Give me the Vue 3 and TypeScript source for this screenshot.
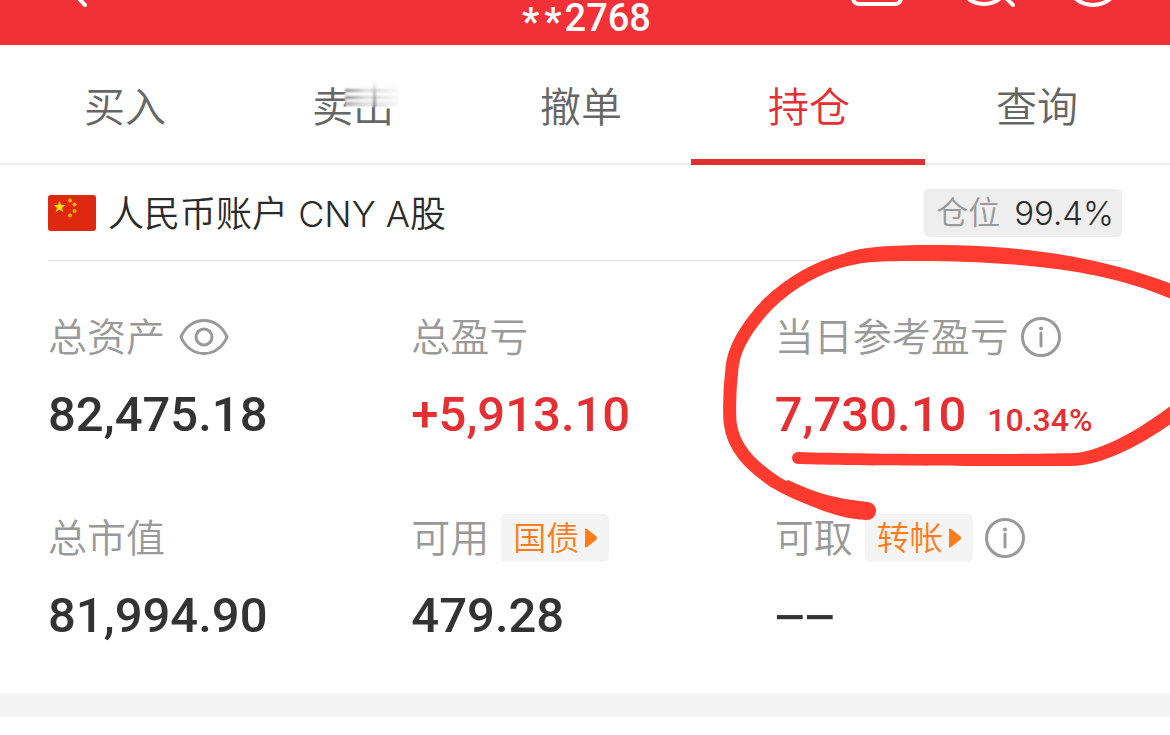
<script setup lang="ts">
interface Stat {
  id: string
  label: string
  value: string
  tone?: 'up' | 'empty'
  extra?: string
  action?: string
  eye?: boolean
  info?: boolean
}

const tabs: string[] = ['买入', '卖出', '撤单', '持仓', '查询']
const activeTab = '持仓'

const stats: Stat[] = [
  { id: 'assets', label: '总资产', value: '82,475.18', eye: true },
  { id: 'profit', label: '总盈亏', value: '+5,913.10', tone: 'up' },
  { id: 'today', label: '当日参考盈亏', value: '7,730.10', tone: 'up', extra: '10.34%', info: true },
  { id: 'market', label: '总市值', value: '81,994.90' },
  { id: 'available', label: '可用', value: '479.28', action: '国债' },
  { id: 'withdraw', label: '可取', value: '−−', tone: 'empty', action: '转帐', info: true },
]
</script>

<template>
  <main class="page">
    <header class="topbar">
      <button class="icon-btn" aria-label="返回">
        <svg width="60" height="45" viewBox="44 0 60 45"><path d="M67 -14L85 5" /></svg>
      </button>
      <h1 class="account"><span class="mask"><span>*</span><span>*</span></span>2768</h1>
      <div class="tools">
        <button class="icon-btn" aria-label="消息">
          <svg width="60" height="45" viewBox="847 0 60 45"><rect x="853" y="-34" width="48" height="38" rx="6" /></svg>
        </button>
        <button class="icon-btn" aria-label="搜索">
          <svg width="60" height="45" viewBox="957 0 60 45"><circle cx="986" cy="-22" r="26" /><path d="M1005 -5L1015 5" /></svg>
        </button>
        <button class="icon-btn" aria-label="更多">
          <svg width="60" height="45" viewBox="1063 0 60 45"><circle cx="1093" cy="-22" r="27" /></svg>
        </button>
      </div>
    </header>

    <nav class="tabs">
      <button v-for="tab in tabs" :key="tab" class="tab" :class="{ active: tab === activeTab }">
        {{ tab }}
        <span v-if="tab === '卖出'" class="smudge" aria-hidden="true"></span>
      </button>
    </nav>

    <section class="account-row">
      <svg class="flag" width="48" height="36" viewBox="0 0 48 36" aria-hidden="true">
        <rect width="48" height="36" rx="3" fill="#de2910" />
        <g fill="#ffde00">
          <path d="M11.500 5.500L13 10L17.500 10L14 12.800L15.300 17.200L11.500 14.500L7.700 17.200L9 12.800L5.500 10L10 10Z" />
          <g opacity=".75">
            <circle cx="22" cy="5.500" r="2" /><circle cx="26.500" cy="9.500" r="2" />
            <circle cx="26.500" cy="16" r="2" /><circle cx="22" cy="20.500" r="2" />
          </g>
        </g>
      </svg>
      <h2 class="account-name">人民币账户 CNY A股</h2>
      <div class="position"><span class="position-label">仓位</span><span>99.4%</span></div>
    </section>

    <section class="stats">
      <div v-for="stat in stats" :key="stat.id" class="stat">
        <div class="stat-head">
          <span>{{ stat.label }}</span>
          <button v-if="stat.eye" class="icon-btn eye" aria-label="隐藏金额">
            <svg width="50" height="36" viewBox="0 0 50 36">
              <path d="M2 18C11 -4 39 -4 48 18C39 40 11 40 2 18Z" /><circle cx="25" cy="18" r="8" />
            </svg>
          </button>
          <button v-if="stat.action" class="action">
            {{ stat.action }}
            <svg width="12" height="20" viewBox="0 0 12 20" aria-hidden="true"><path d="M0 1Q0 0 2 1L11 8Q13 10 11 12L2 19Q0 20 0 19Z" /></svg>
          </button>
          <button v-if="stat.info" class="icon-btn info" aria-label="说明">
            <svg width="40" height="40" viewBox="0 0 40 40">
              <circle cx="20" cy="20" r="18.500" /><path d="M20 16V29" /><circle class="dot" cx="20" cy="11.500" r="2" />
            </svg>
          </button>
        </div>
        <div class="stat-value" :class="stat.tone">
          <span>{{ stat.value }}</span>
          <span v-if="stat.extra" class="extra">{{ stat.extra }}</span>
        </div>
      </div>
    </section>

    <div class="divider"></div>

    <svg class="marker" width="470" height="300" viewBox="700 230 470 300" aria-hidden="true">
      <path d="M1190 291C1120 262 1040 245 933 245C890 245 862 247 845 253V266C862 261 885 261 933 261C1040 263 1120 272 1190 308Z" />
      <path class="stroke" d="M933 253C885 253 865 255 845 260C815 268 790 283 768 304C750 323 734 345 732 368C730 385 729 405 730 422C733 448 750 465 775 482C800 497 835 509 867 511" />
      <path d="M775 488C800 502 835 519 866 520A9 9 0 0 0 868 502C830 498 812 491 788 480Z" />
      <path d="M1190 390C1160 416 1110 450 1075 453C1000 455 850 454 798 452A6 6 0 0 0 798 464C850 466 1000 466 1067 466C1110 468 1165 429 1190 410Z" />
    </svg>
  </main>
</template>

<style>
body {
  margin: 0;
  background: #fff;
}
</style>

<style scoped>
.page {
  position: relative;
  overflow: hidden;
  background: #fff;
  color: #2b2b2b;
  font-family: Inter, "Noto Sans CJK SC", sans-serif;
  font-weight: 350;
}
button {
  margin: 0;
  padding: 0;
  border: 0;
  background: none;
  font: inherit;
  color: inherit;
}
.icon-btn {
  display: flex;
}
.icon-btn svg {
  fill: none;
  stroke: currentColor;
  stroke-width: 4;
  stroke-linecap: round;
}
.topbar {
  display: grid;
  grid-template-columns: 1fr auto 1fr;
  height: 45px;
  padding: 0 47px 0 44px;
  background: #f23038;
  color: #fff;
}
.account {
  display: flex;
  margin: 0;
  padding-left: 6px;
  font: 500 38px/36px Roboto, sans-serif;
}
.mask {
  display: flex;
  gap: 5px;
  padding: 4px 3px 0 0;
  font-weight: 700;
}
.tools {
  display: flex;
  justify-content: flex-end;
  gap: 48px;
}
.tabs {
  display: grid;
  grid-template-columns: repeat(5, 1fr);
  padding: 0 19px 0 11px;
  border-bottom: 2px solid #ededed;
}
.tab {
  position: relative;
  height: 118px;
  padding-top: 6px;
  font-size: 41px;
  line-height: 60px;
  color: #666;
}
.tab.active {
  color: #e62e33;
}
.tab.active::after {
  content: "";
  position: absolute;
  inset: auto -2px -2px -4px;
  height: 6px;
  background: #df3031;
}
.smudge {
  position: absolute;
  left: 106px;
  top: 36px;
  width: 54px;
  height: 26px;
  background:
    linear-gradient(transparent, #8a8a8a) 28px 0 / 3px 26px no-repeat,
    linear-gradient(90deg, #888, #ddd 40%, #ddd 60%, transparent) 0 8px / 54px 3px no-repeat,
    linear-gradient(90deg, #888, #ddd 40%, #ddd 60%, transparent) 0 15px / 54px 3px no-repeat,
    linear-gradient(90deg, #aaa, #e5e5e5 40%, #e5e5e5 60%, transparent) 0 21px / 54px 4px no-repeat,
    linear-gradient(#fff, #f8f8f8);
  filter: blur(1px);
}
.account-row {
  display: flex;
  align-items: center;
  height: 95px;
  margin: 0 48px;
  border-bottom: 1px solid #e5e5e5;
}
.account-name {
  flex: 1;
  margin: 0 0 0 12px;
  padding-top: 2px;
  font-size: 36px;
  line-height: 48px;
  font-weight: inherit;
}
.position {
  display: flex;
  gap: 14px;
  padding: 0 8px 0 12px;
  border-radius: 5px;
  background: #eee;
  font-size: 33px;
  line-height: 48px;
}
.position-label {
  font-size: 32px;
  color: #999;
}
.stats {
  display: grid;
  grid-template-columns: repeat(3, 1fr);
  row-gap: 69px;
  padding: 52px 32px 47px 48px;
}
.stat-head {
  display: flex;
  align-items: center;
  height: 48px;
  font-size: 39px;
  line-height: 48px;
  color: #999;
  white-space: nowrap;
}
.eye {
  margin-left: 14px;
}
.eye svg,
.info svg {
  stroke-width: 3;
}
.info {
  margin-left: 12px;
}
.dot {
  fill: #999;
  stroke: none;
}
.action {
  display: flex;
  align-items: center;
  gap: 6px;
  height: 48px;
  margin-left: 12px;
  padding: 0 12px;
  border-radius: 5px;
  background: #f4f4f4;
  color: #ff7d18;
  font-size: 33px;
  line-height: 48px;
}
.action svg {
  fill: currentColor;
}
.stat-value {
  display: flex;
  align-items: baseline;
  gap: 21px;
  height: 60px;
  margin-top: 24px;
  font: 500 49px/60px Roboto, sans-serif;
  color: #333;
  white-space: nowrap;
}
.stat-value.up {
  color: #e62e33;
}
.extra {
  font-size: 32px;
  line-height: 40px;
}
.stat-value.empty {
  font-family: "DejaVu Sans Mono", monospace;
  font-size: 50px;
}
.divider {
  height: 24px;
  background: #f4f4f4;
}
.marker {
  position: absolute;
  top: 230px;
  right: 0;
  fill: #ff3b30;
  pointer-events: none;
}
.stroke {
  fill: none;
  stroke: #ff3b30;
  stroke-width: 13;
  stroke-linecap: round;
}
</style>
